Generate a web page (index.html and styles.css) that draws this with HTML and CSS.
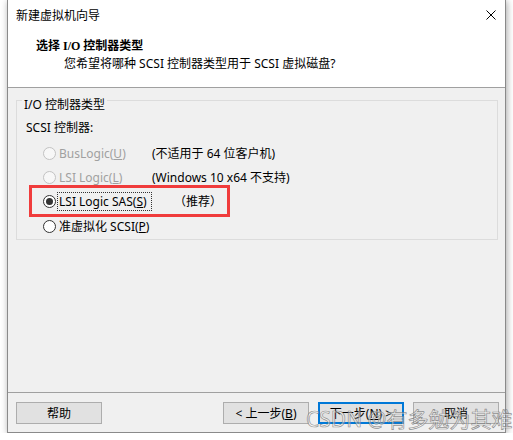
FILE: index.html
```html
<!DOCTYPE html>
<html lang="zh-CN">
<head>
  <meta charset="UTF-8">
  <meta name="viewport" content="width=device-width, initial-scale=1.0">
  <title>新建虚拟机向导</title>
  <link rel="stylesheet" href="styles.css">
</head>
<body>
<div class="window">
  <div class="header">
    <div class="titlebar">
      <span class="title">新建虚拟机向导</span>
      <svg class="close" width="10" height="10" viewBox="0 0 10 10">
        <path d="M0.5 0.5 L9.5 9.5 M9.5 0.5 L0.5 9.5" stroke="#000" stroke-width="1" fill="none"/>
      </svg>
    </div>
    <div class="heading">选择 I/O 控制器类型</div>
    <div class="subheading">您希望将哪种 SCSI 控制器类型用于 SCSI 虚拟磁盘?</div>
  </div>

  <div class="content">
    <div class="group">
      <div class="group-title">I/O 控制器类型</div>
      <div class="group-label">SCSI 控制器:</div>
      <div class="option disabled">
        <span class="radio"></span>
        <span class="option-label">BusLogic(<u>U</u>)</span>
        <span class="note">(不适用于 64 位客户机)</span>
      </div>
      <div class="option disabled">
        <span class="radio"></span>
        <span class="option-label">LSI Logic(<u>L</u>)</span>
        <span class="note">(Windows 10 x64 不支持)</span>
      </div>
      <div class="option">
        <span class="radio checked"></span>
        <span class="option-label focused">LSI Logic SAS(<u>S</u>)</span>
        <span class="note note-recommend">（推荐）</span>
      </div>
      <div class="option">
        <span class="radio"></span>
        <span class="option-label">准虚拟化 SCSI(<u>P</u>)</span>
      </div>
    </div>
  </div>

  <div class="footer">
    <button class="btn">帮助</button>
    <div class="footer-right">
      <button class="btn">&lt; 上一步(<u>B</u>)</button>
      <button class="btn btn-default">下一步(<u>N</u>) &gt;</button>
      <button class="btn">取消</button>
    </div>
  </div>

  <div class="highlight"></div>
  <div class="watermark">CSDN @有多勉为其难</div>
</div>
</body>
</html>
```

FILE: styles.css
```css
body { margin: 0; background: #fff; font-family: "Noto Sans", "Noto Sans CJK SC", sans-serif; font-size: 12px; color: #000; }

.window { position: relative; box-sizing: border-box; width: 499px; height: 433px; margin-left: 7px; display: flex; flex-direction: column; background: #f0f0f0; border: 1px solid #8a8a8a; border-top: none; box-shadow: 1px 1px 7px rgba(0, 0, 0, 0.35); }

.header { flex-shrink: 0; height: 87px; background: #fff; border-bottom: 1px solid #a0a0a0; }
.titlebar { height: 31px; display: flex; align-items: center; justify-content: space-between; padding: 0 9px 0 8px; }
.title { line-height: 16px; }
.close { display: block; margin-top: -1px; }
.heading { margin-top: 7px; padding-left: 28px; line-height: 16px; font-weight: bold; font-family: "Liberation Serif", "Noto Sans CJK SC", serif; }
.subheading { margin-top: 2px; padding-left: 56px; line-height: 16px; }

.content { flex: 1; padding: 12px 7px 0 8px; }
.group { box-sizing: border-box; height: 140px; border: 1px solid #dcdcdc; padding-left: 9px; }
.group-title { display: table; margin: -2px 0 0 -4px; padding: 0 2px; background: #f0f0f0; line-height: 12px; }
.group-label { margin-top: 9px; line-height: 16px; }

.option { display: flex; align-items: center; height: 24px; }
.group-label + .option { margin-top: 5px; }
.option:last-child { height: 25px; margin-top: 1px; }
.radio { box-sizing: border-box; width: 13px; height: 13px; margin-left: 17px; border: 1px solid #333; border-radius: 50%; background: #fff; display: flex; align-items: center; justify-content: center; }
.radio.checked::after { content: ""; width: 7px; height: 7px; border-radius: 50%; background: #333; }
.option-label { box-sizing: border-box; width: 95px; margin-left: 1px; padding: 0 1px; border: 1px dotted transparent; line-height: 17px; white-space: nowrap; }
.option-label.focused { border-color: #333; }
.note { white-space: nowrap; }
.note-recommend { margin-left: 22px; }

.disabled .radio { border-color: #c2c2c2; background: #f7f7f7; }
.disabled .option-label { color: #a0a0a0; }

.footer { display: flex; justify-content: space-between; border-top: 1px solid #a0a0a0; padding: 9px 6px 8px 8px; }
.footer-right { display: flex; gap: 9px; }
.btn { box-sizing: border-box; width: 86px; height: 22px; padding: 0; background: #e1e1e1; border: 1px solid #adadad; font-family: inherit; font-size: 12px; color: #000; }
.btn-default { border: 2px solid #0078d7; }

.highlight { position: absolute; left: 21px; top: 185px; width: 201px; height: 32px; box-sizing: border-box; border: 3px solid #f03c3c; }
.watermark { position: absolute; left: 298px; top: 407px; line-height: 24px; font-size: 21px; color: rgba(255, 255, 255, 0.45); -webkit-text-stroke: 0.7px rgba(110, 110, 110, 0.75); white-space: nowrap; pointer-events: none; }
```
